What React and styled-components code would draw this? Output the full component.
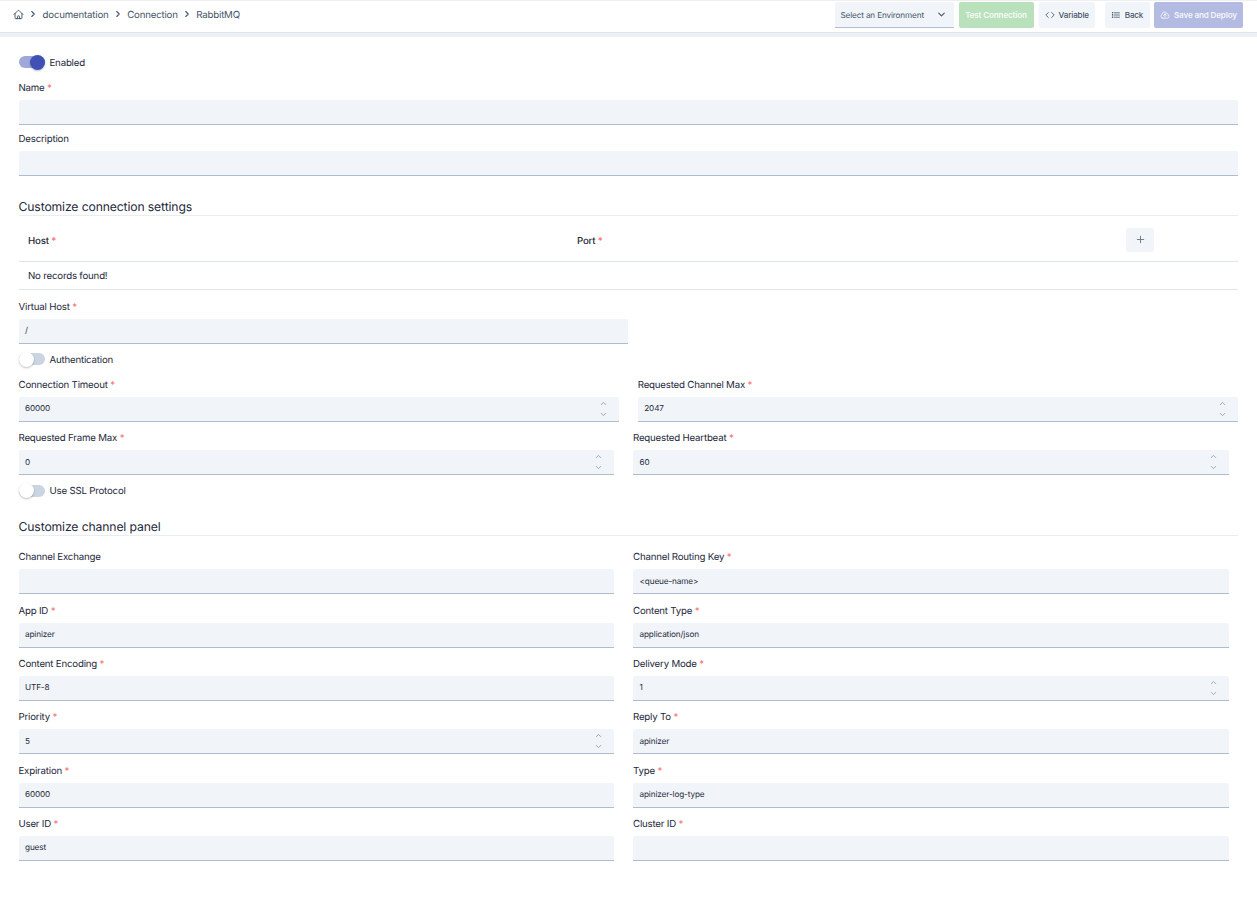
import React from "react";
import styled, { createGlobalStyle } from "styled-components";
import { HiOutlineHome, HiOutlineListBullet, HiOutlineCloudArrowUp } from "react-icons/hi2";
import { ChevronDown, ChevronUp, ChevronRight, Code, Plus } from "lucide-react";

const GlobalStyle = createGlobalStyle`
  * { box-sizing: border-box; }
  body {
    margin: 0;
    background: #fff;
    color: #1e293b;
    font-family: Inter, "Liberation Sans", sans-serif;
    font-size: 9.7px;
    letter-spacing: -0.2px;
    text-rendering: geometricPrecision;
  }
`;

const Header = styled.header`
  display: flex;
  align-items: center;
  justify-content: space-between;
  height: 37px;
  padding: 0 14px 8px 13px;
  border-top: 1px solid #efefef;
  background: linear-gradient(#fff 0 31px, #dfe5ea 31px 32px, #edf1f5 32px);
`;

const Breadcrumb = styled.nav`
  display: flex;
  align-items: center;
  gap: 4.3px;
  color: #475569;
  line-height: 14px;
  svg { flex: none; margin-bottom: 1.5px; }
  span { padding-top: 1px; }
`;

const Actions = styled.div`
  display: flex;
  align-items: center;
`;

const tones = {
  light: { bg: "#f1f5f9", fg: "#475569" },
  green: { bg: "#b9e1bb", fg: "#f6fbf6" },
  indigo: { bg: "#b3bbe2", fg: "#f5f6fc" },
};

const Button = styled.button`
  display: flex;
  align-items: center;
  justify-content: center;
  gap: 4px;
  width: ${(p) => p.$width}px;
  height: 25.5px;
  margin-left: ${(p) => p.$gap}px;
  padding: 0 0 1px;
  border: 0;
  border-radius: 2px;
  background: ${(p) => tones[p.$tone].bg};
  color: ${(p) => tones[p.$tone].fg};
  font: ${(p) => p.$weight || 550} 8.1px Inter, sans-serif;
  letter-spacing: ${(p) => (p.$weight ? -0.15 : -0.15)}px;
  white-space: nowrap;
  svg { flex: none; }
`;

const Select = styled.div`
  display: flex;
  align-items: center;
  justify-content: space-between;
  width: 119px;
  height: 25.5px;
  padding: 0 6.5px 0 6px;
  border-bottom: 1px solid #b2bfd0;
  border-radius: 2px 2px 0 0;
  background: #f1f5f9;
  color: #475569;
  font-size: 8.2px;
  letter-spacing: -0.15px;
`;

const Main = styled.main`
  padding: 17px 19px 0 18.5px;
`;

const SwitchRow = styled.label`
  display: flex;
  align-items: center;
  gap: 4.5px;
  height: 16px;
  margin-top: ${(p) => p.$top || 0}px;
  span { padding-top: 3px; line-height: 14px; }
`;

const Track = styled.i`
  display: flex;
  align-items: center;
  justify-content: ${(p) => (p.$on ? "flex-end" : "flex-start")};
  width: 26.5px;
  height: 12px;
  border-radius: 6px;
  background: ${(p) => (p.$on ? "#9fa8da" : "#cbd5e1")};
  &::before {
    content: "";
    width: 15px;
    height: 15px;
    border-radius: 50%;
    background: ${(p) => (p.$on ? "#3f51b5" : "#fff")};
    box-shadow: 0 1px 2px rgba(15, 23, 42, 0.28);
  }
`;

const Row = styled.div`
  display: grid;
  grid-template-columns: ${(p) => (p.$half ? "609.9px" : "1fr 1fr")};
  column-gap: 19px;
  width: ${(p) => p.$width || 1219.5}px;
  margin-top: ${(p) => p.$top}px;
`;

const Single = styled.div`
  margin-top: ${(p) => p.$top}px;
`;

const Label = styled.div`
  height: 20px;
  padding-top: 1px;
  line-height: 16px;
  white-space: nowrap;
`;

const Star = styled.span`
  color: #f87171;
`;

const Control = styled.div`
  display: flex;
  align-items: center;
  justify-content: space-between;
  height: 25px;
  padding: 0 11px 0 6.5px;
  border-bottom: 1px solid #aebdcd;
  border-radius: 2px 2px 0 0;
  background: #f1f5f9;
  font-size: 8.2px;
  letter-spacing: -0.12px;
  > span:first-child { padding-bottom: 1.5px; }
`;

const Spinner = styled.span`
  display: flex;
  flex-direction: column;
  gap: 2px;
  color: #94a3b8;
  svg { display: block; }
`;

const Heading = styled.h2`
  height: 18px;
  margin: ${(p) => p.$top}px 0 0;
  border-bottom: 1px solid #e9edf1;
  font-size: 12.2px;
  font-weight: 400;
  letter-spacing: -0.13px;
  line-height: 17px;
`;

const TableHead = styled.div`
  display: grid;
  grid-template-columns: 549px 549px 1fr;
  align-items: center;
  height: 45.5px;
  padding: 5px 0 0 9.5px;
  border-bottom: 1px solid #dde4ec;
  font-weight: 500;
`;

const TableEmpty = styled.div`
  height: 28.2px;
  padding-left: 9.5px;
  border-bottom: 1px solid #dce4ec;
  line-height: 29px;
`;

const AddButton = styled(Button)`
  height: 24px;
  margin-top: -2px;
  color: #64748b;
`;

const Caption = ({ text, required }) => (
  <>{text}{required && <Star> *</Star>}</>
);

const Field = ({ label, value, required = true, spin }) => (
  <div>
    <Label><Caption text={label} required={required} /></Label>
    <Control>
      <span>{value}</span>
      {spin && (
        <Spinner>
          <ChevronUp size={9} strokeWidth={2.5} />
          <ChevronDown size={9} strokeWidth={2.5} />
        </Spinner>
      )}
    </Control>
  </div>
);

const Switch = ({ label, on, top }) => (
  <SwitchRow $top={top}>
    <Track $on={on} />
    <span>{label}</span>
  </SwitchRow>
);

const channelRows = [
  [{ label: "Channel Exchange", required: false }, { label: "Channel Routing Key", value: "<queue-name>" }],
  [{ label: "App ID", value: "apinizer" }, { label: "Content Type", value: "application/json" }],
  [{ label: "Content Encoding", value: "UTF-8" }, { label: "Delivery Mode", value: "1", spin: true }],
  [{ label: "Priority", value: "5", spin: true }, { label: "Reply To", value: "apinizer" }],
  [{ label: "Expiration", value: "60000" }, { label: "Type", value: "apinizer-log-type" }],
  [{ label: "User ID", value: "guest" }, { label: "Cluster ID" }],
];

export default function App() {
  return (
    <>
      <GlobalStyle />
      <Header>
        <Breadcrumb>
          <HiOutlineHome size={11} strokeWidth={2} />
          <ChevronRight size={10} strokeWidth={2.6} />
          <span>documentation</span>
          <ChevronRight size={10} strokeWidth={2.6} />
          <span>Connection</span>
          <ChevronRight size={10} strokeWidth={2.6} />
          <span>RabbitMQ</span>
        </Breadcrumb>
        <Actions>
          <Select>
            <span>Select an Environment</span>
            <ChevronDown size={11} strokeWidth={2.4} />
          </Select>
          <Button $tone="green" $width={75} $gap={5} $weight={600}>Test Connection</Button>
          <Button $tone="light" $width={56.5} $gap={5}>
            <Code size={10} />Variable
          </Button>
          <Button $tone="light" $width={45} $gap={9.5}>
            <HiOutlineListBullet size={10} strokeWidth={2} />Back
          </Button>
          <Button $tone="indigo" $width={89} $gap={4.5} $weight={600}>
            <HiOutlineCloudArrowUp size={10} strokeWidth={2} />Save and Deploy
          </Button>
        </Actions>
      </Header>
      <Main>
        <Switch label="Enabled" on />
        <Single $top={9.7}><Field label="Name" /></Single>
        <Single $top={6.2}><Field label="Description" required={false} /></Single>
        <Heading $top={22.5}>Customize connection settings</Heading>
        <TableHead>
          <span><Caption text="Host" required /></span>
          <span><Caption text="Port" required /></span>
          <AddButton $tone="light" $width={28} $gap={0}>
            <Plus size={11} strokeWidth={2} />
          </AddButton>
        </TableHead>
        <TableEmpty>No records found!</TableEmpty>
        <Row $half $top={9}><Field label="Virtual Host" value="/" /></Row>
        <Switch label="Authentication" top={7} />
        <Row $top={10}>
          <Field label="Connection Timeout" value="60000" spin />
          <Field label="Requested Channel Max" value="2047" spin />
        </Row>
        <Row $width={1210} $top={8.3}>
          <Field label="Requested Frame Max" value="0" spin />
          <Field label="Requested Heartbeat" value="60" spin />
        </Row>
        <Switch label="Use SSL Protocol" top={7.3} />
        <Heading $top={19.5}>Customize channel panel</Heading>
        {channelRows.map(([left, right], i) => (
          <Row key={left.label} $width={1210} $top={i ? 8.4 : 13.1}>
            <Field {...left} />
            <Field {...right} />
          </Row>
        ))}
      </Main>
    </>
  );
}
